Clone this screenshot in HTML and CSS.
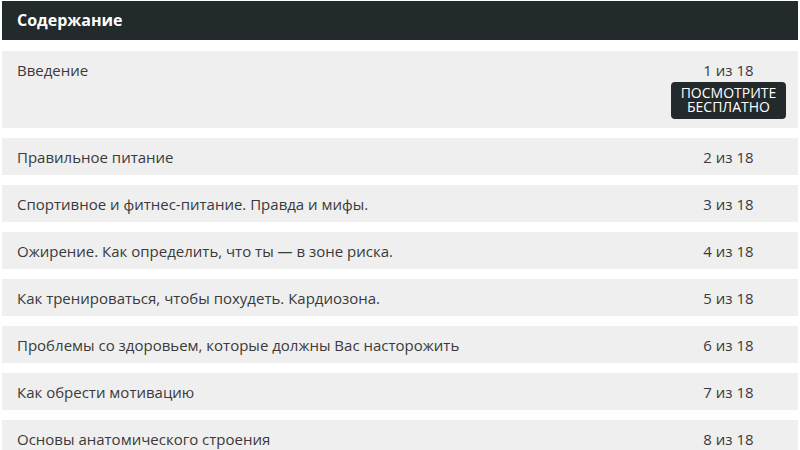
FILE: index.html
```html
<!DOCTYPE html>
<html lang="ru">
<head>
    <meta charset="UTF-8">
    <meta name="viewport" content="width=device-width, initial-scale=1.0">
    <title>Содержание</title>
    <link rel="stylesheet" href="styles.css">
</head>
<body>
    <div class="toc">
        <div class="toc-title">Содержание</div>
        <ul class="lessons">
            <li class="lesson">
                <span class="lesson-name">Введение</span>
                <div class="lesson-side">
                    <span class="lesson-num">1 из 18</span>
                    <a href="#" class="free-btn">Посмотрите бесплатно</a>
                </div>
            </li>
            <li class="lesson">
                <span class="lesson-name">Правильное питание</span>
                <div class="lesson-side"><span class="lesson-num">2 из 18</span></div>
            </li>
            <li class="lesson">
                <span class="lesson-name">Спортивное и фитнес-питание. Правда и мифы.</span>
                <div class="lesson-side"><span class="lesson-num">3 из 18</span></div>
            </li>
            <li class="lesson">
                <span class="lesson-name">Ожирение. Как определить, что ты — в зоне риска.</span>
                <div class="lesson-side"><span class="lesson-num">4 из 18</span></div>
            </li>
            <li class="lesson">
                <span class="lesson-name">Как тренироваться, чтобы похудеть. Кардиозона.</span>
                <div class="lesson-side"><span class="lesson-num">5 из 18</span></div>
            </li>
            <li class="lesson">
                <span class="lesson-name">Проблемы со здоровьем, которые должны Вас насторожить</span>
                <div class="lesson-side"><span class="lesson-num">6 из 18</span></div>
            </li>
            <li class="lesson">
                <span class="lesson-name">Как обрести мотивацию</span>
                <div class="lesson-side"><span class="lesson-num">7 из 18</span></div>
            </li>
            <li class="lesson">
                <span class="lesson-name">Основы анатомического строения</span>
                <div class="lesson-side"><span class="lesson-num">8 из 18</span></div>
            </li>
        </ul>
    </div>
</body>
</html>
```

FILE: styles.css
```css
body {
    font-family: "Open Sans", Arial, sans-serif;
    background-color: #fff;
    color: #3a3a3a;
    margin: 0;
    padding: 1px 2px 0;
}

.toc-title {
    background-color: #232a2c;
    color: #fff;
    font-size: 16px;
    font-weight: bold;
    padding: 9px 15px 10px;
    line-height: 20px;
}

.lessons {
    list-style: none;
    margin: 11px 0 0;
    padding: 0;
}

.lesson {
    display: flex;
    justify-content: space-between;
    align-items: flex-start;
    background-color: #efefef;
    margin-bottom: 10px;
    padding: 10px 12px 9px 15px;
    font-size: 15px;
    line-height: 18px;
}

.lesson-side {
    width: 115px;
    display: flex;
    flex-direction: column;
    align-items: center;
}

.free-btn {
    display: block;
    margin-top: 3px;
    background-color: #232a2c;
    color: #fff;
    text-decoration: none;
    text-transform: uppercase;
    text-align: center;
    font-size: 14px;
    line-height: 14px;
    padding: 4px 0 5px;
    border-radius: 4px;
    width: 115px;
}
```
